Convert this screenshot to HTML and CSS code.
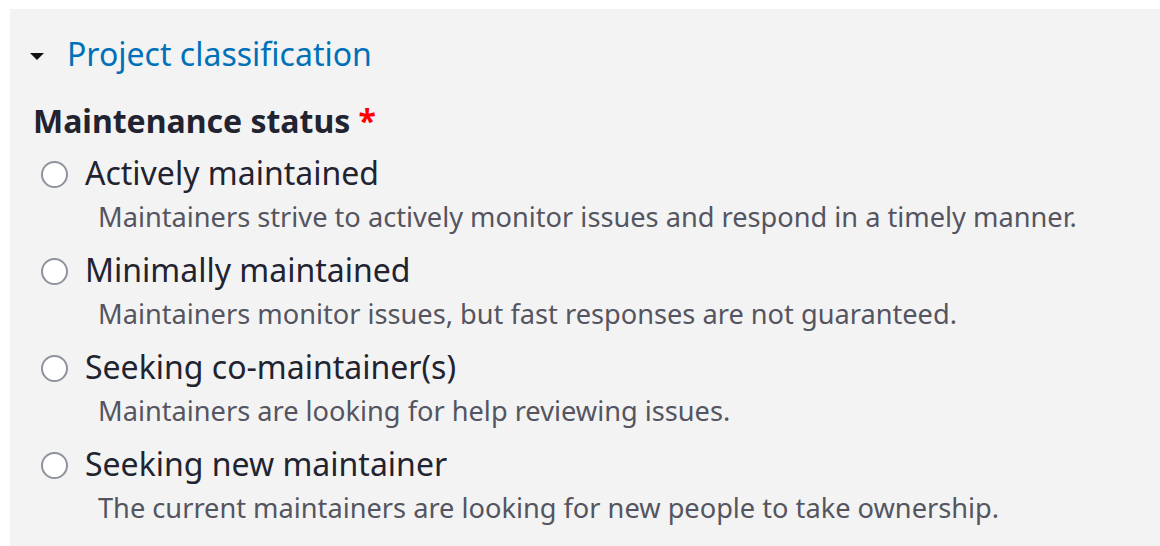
FILE: index.html
```html
<!DOCTYPE html>
<html>
<head>
<meta charset="utf-8">
<link rel="stylesheet" href="styles.css">
</head>
<body>
<div class="panel">
  <details open>
    <summary class="summary"><span class="arrow"></span><span class="summary-text">Project classification</span></summary>
    <fieldset class="group">
      <legend class="legend">Maintenance status <span class="req">*</span></legend>
      <div class="option">
        <div class="row"><span class="radio"></span><span class="label">Actively maintained</span></div>
        <div class="desc">Maintainers strive to actively monitor issues and respond in a timely manner.</div>
      </div>
      <div class="option">
        <div class="row"><span class="radio"></span><span class="label">Minimally maintained</span></div>
        <div class="desc">Maintainers monitor issues, but fast responses are not guaranteed.</div>
      </div>
      <div class="option">
        <div class="row"><span class="radio"></span><span class="label">Seeking co-maintainer(s)</span></div>
        <div class="desc">Maintainers are looking for help reviewing issues.</div>
      </div>
      <div class="option">
        <div class="row"><span class="radio"></span><span class="label">Seeking new maintainer</span></div>
        <div class="desc">The current maintainers are looking for new people to take ownership.</div>
      </div>
    </fieldset>
  </details>
</div>
</body>
</html>
```
FILE: styles.css
```css
html, body { margin: 0; padding: 0; background: #fff; }
body { padding: 9px 0 0 10px; font-family: "Noto Sans", sans-serif; color: #222330; overflow: hidden; }
.panel { background: #f3f3f3; height: 560px; padding: 0 0 0 23px; }
details { margin: 0; }
summary { list-style: none; display: flex; align-items: center; padding-top: 25px; cursor: pointer; }
summary::-webkit-details-marker { display: none; }
.arrow { width: 0; height: 0; border-left: 7px solid transparent; border-right: 7px solid transparent; border-top: 7px solid #111; margin: 4px 0 0 -3px; }
.summary-text { color: #0071b8; font-size: 32px; margin-left: 23px; line-height: 40px; }
.group { border: 0; margin: 27px 0 0; padding: 0; }
.legend { padding: 0; font-weight: 700; font-size: 32px; line-height: 40px; }
.req { color: #f00; }
.option { margin-top: 10px; }
.row { display: flex; align-items: center; height: 44px; }
.radio { width: 23px; height: 23px; border: 2px solid #8e929c; border-radius: 50%; background: #fff; margin: 3px 0 0 8px; box-sizing: content-box; }
.label { font-size: 32px; line-height: 44px; margin-left: 17px; }
.desc { font-size: 27.2px; line-height: 40px; color: #545560; margin: 2px 0 0 65px; }
.option + .option { margin-top: 11px; }
```
